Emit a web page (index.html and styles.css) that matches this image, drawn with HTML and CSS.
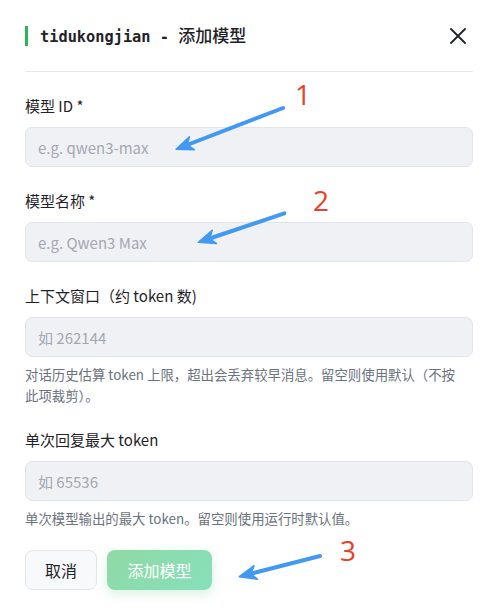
FILE: index.html
```html
<!DOCTYPE html>
<html lang="zh-CN">
<head>
  <meta charset="UTF-8" />
  <meta name="viewport" content="width=device-width, initial-scale=1.0" />
  <title>添加模型</title>
  <link rel="stylesheet" href="styles.css">
</head>
<body>
  <div class="dialog">
    <header class="dialog-head">
      <h2 class="dialog-title"><span class="provider">tidukongjian - </span>添加模型</h2>
      <button class="close" type="button" aria-label="关闭">
        <svg width="16" height="16" viewBox="0 0 16 16">
          <path d="M1 1 L15 15 M15 1 L1 15" stroke="#1f2329" stroke-width="1.8" stroke-linecap="round" fill="none"/>
        </svg>
      </button>
    </header>

    <form class="dialog-body" onsubmit="return false">
      <div class="field">
        <label for="modelId">模型 ID *</label>
        <input id="modelId" type="text" placeholder="e.g. qwen3-max" />
      </div>

      <div class="field">
        <label for="modelName">模型名称 *</label>
        <input id="modelName" type="text" placeholder="e.g. Qwen3 Max" />
      </div>

      <div class="field">
        <label for="ctxWindow">上下文窗口（约 token 数)</label>
        <input id="ctxWindow" type="text" placeholder="如 262144" />
        <p class="help">对话历史估算 token 上限，超出会丢弃较早消息。留空则使用默认（不按此项裁剪）。</p>
      </div>

      <div class="field">
        <label for="maxTokens">单次回复最大 token</label>
        <input id="maxTokens" type="text" placeholder="如 65536" />
        <p class="help">单次模型输出的最大 token。留空则使用运行时默认值。</p>
      </div>

      <div class="actions">
        <button class="btn" type="button">取消</button>
        <button class="btn primary" type="submit">添加模型</button>
      </div>
    </form>

    <!-- numbered pointers laid over the form -->
    <svg class="marks" width="492" height="612" viewBox="0 0 492 612">
      <g stroke="#4299f2" fill="#4299f2" stroke-linecap="round" stroke-linejoin="round">
        <line x1="283" y1="108" x2="187" y2="145" stroke-width="4"/>
        <path d="M176 149.3 L189.4 136.7 L187.2 145 L194.4 149.7 Z" stroke-width="1.5"/>

        <line x1="284.3" y1="213.3" x2="209.7" y2="238.5" stroke-width="4"/>
        <path d="M198.3 242.3 L212.2 230.3 L209.7 238.5 L216.6 243.5 Z" stroke-width="1.5"/>

        <line x1="320" y1="556" x2="250.9" y2="573.7" stroke-width="4"/>
        <path d="M239.3 576.7 L254.1 565.7 L250.9 573.7 L257.5 579.3 Z" stroke-width="1.5"/>
      </g>
      <g class="mark-num" fill="#e8412c" text-anchor="middle">
        <text x="303" y="105">1</text>
        <text x="321" y="211">2</text>
        <text x="348" y="561">3</text>
      </g>
    </svg>
  </div>
</body>
</html>
```

FILE: styles.css
```css
body {
  margin: 0;
  background: #fff;
  color: #1f2329;
  font-family: "Noto Sans CJK SC", "Noto Sans", sans-serif;
}

.dialog {
  position: relative;
  width: 492px;
  height: 612px;
  box-sizing: border-box;
  padding: 0 19px 0 25px;
  overflow: hidden;
}

.dialog-head {
  height: 71px;
  display: flex;
  align-items: center;
  justify-content: space-between;
  border-bottom: 1px solid #e6e8eb;
}
.dialog-title {
  margin: 0;
  padding-left: 12px;
  border-left: 3px solid #2bb55b;
  font-size: 17px;
  line-height: 17px;
  font-weight: 500;
  color: #1f2329;
}
.dialog-title .provider {
  font-family: "DejaVu Sans Mono", "Liberation Mono", monospace;
  font-size: 15.3px;
  font-weight: 700;
  white-space: pre;
}
.close {
  width: 30px;
  height: 30px;
  padding: 0;
  border: none;
  background: none;
  display: flex;
  align-items: center;
  justify-content: center;
}

.dialog-body {
  padding-top: 23px;
}
.field {
  margin-bottom: 23px;
}
.field label {
  display: block;
  font-size: 15px;
  line-height: 22px;
  margin-bottom: 10px;
  color: #1f2329;
}
.field input {
  display: block;
  width: 100%;
  height: 40px;
  box-sizing: border-box;
  padding: 0 12px;
  border: 1px solid #e1e4ea;
  border-radius: 7px;
  background: #f0f1f5;
  font: inherit;
  font-size: 15px;
  color: #1f2329;
  outline: none;
}
.field input::placeholder {
  color: #a3a8b2;
}
.help {
  max-width: 440px;
  margin: 7px 0 0;
  font-size: 13.4px;
  line-height: 21px;
  color: #6b7280;
}

.actions {
  display: flex;
  gap: 10px;
  margin-top: -2px;
}
.btn {
  height: 40px;
  padding: 0 19px;
  border: 1px solid #e3e5ea;
  border-radius: 8px;
  background: #f8f9fb;
  font: inherit;
  font-size: 16px;
  color: #1f2329;
}
.btn.primary {
  border: none;
  padding: 0 20.5px;
  color: #fff;
  background: linear-gradient(135deg, #8fdaa5, #87dfbb);
  box-shadow: 0 4px 12px rgba(70, 190, 120, 0.22);
}

.marks {
  position: absolute;
  top: 0;
  left: 0;
  pointer-events: none;
}
.mark-num {
  font-family: "Open Sans", "Liberation Sans", sans-serif;
  font-size: 28px;
}
```
